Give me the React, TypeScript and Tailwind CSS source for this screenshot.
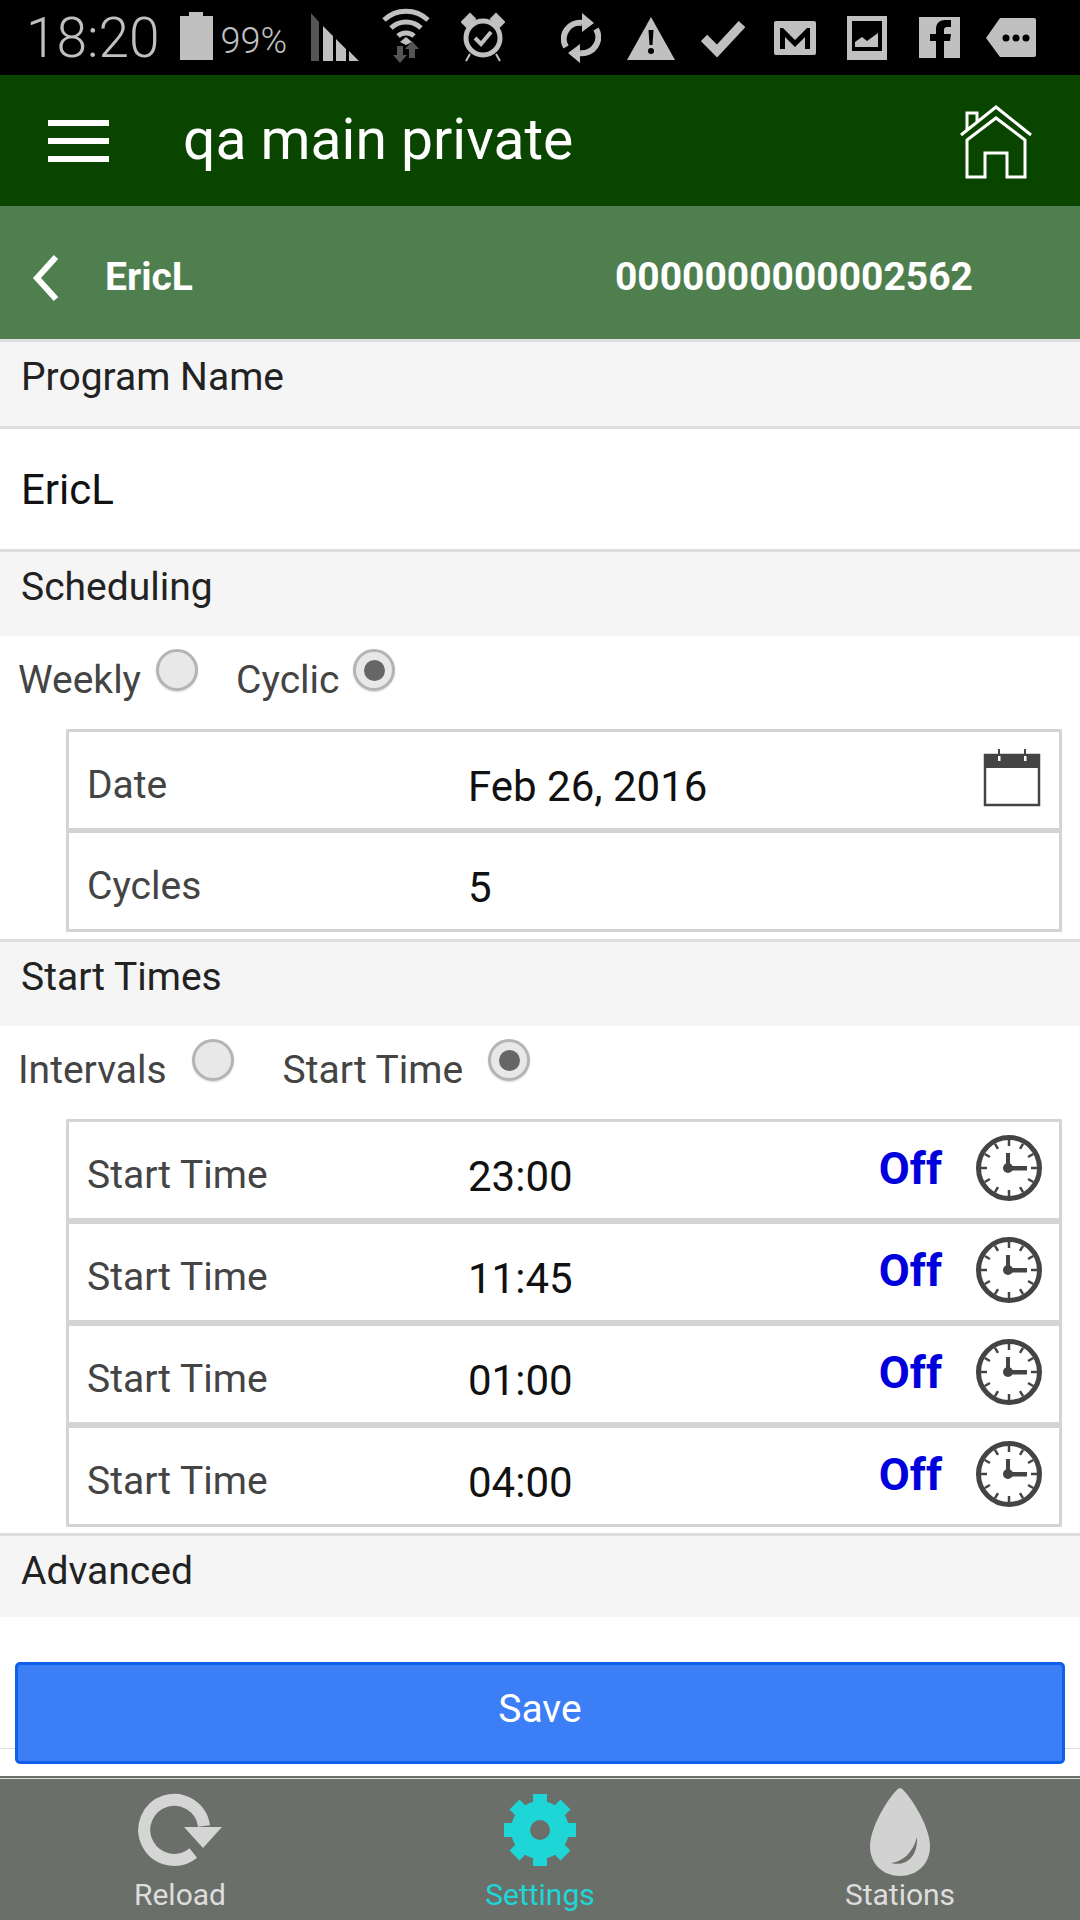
import React from "react";

const G = "#c0c0c0";

function Radio({ checked }: { checked?: boolean }) {
  return (
    <span className="relative flex h-[42px] w-[42px] shrink-0 items-center justify-center rounded-full border-[3px] border-[#b4b4b4] bg-[#e8e8e8] shadow-[0_1px_2px_rgba(0,0,0,0.15)]">
      {checked && <span className="h-[21px] w-[21px] rounded-full bg-[#666666]" />}
    </span>
  );
}

function Section({ label, h = "h-[87px]" }: { label: string; h?: string }) {
  return (
    <div className={`flex ${h} shrink-0 items-start border-t-[3px] border-[#dddddd] bg-[#f5f5f5] pl-[21px] pt-[13px] text-[39px] leading-[44px] text-[#222222]`}>
      {label}
    </div>
  );
}

function Clock() {
  const ticks = [0, 30, 60, 90, 120, 150, 180, 210, 240, 270, 300, 330];
  return (
    <svg viewBox="0 0 70 70" className="h-[70px] w-[70px] shrink-0">
      <circle cx="35" cy="35" r="30.5" fill="none" stroke="#444444" strokeWidth="5" />
      {ticks.map((a) => (
        <line key={a} x1="35" y1="7" x2="35" y2="13" stroke="#444444" strokeWidth="2.500" transform={`rotate(${a} 35 35)`} />
      ))}
      <circle cx="34" cy="35" r="5" fill="#444444" />
      <rect x="32" y="20" width="4" height="15" fill="#444444" />
      <rect x="34" y="33" width="19" height="4.500" fill="#444444" />
    </svg>
  );
}

function Calendar() {
  return (
    <svg viewBox="0 0 58 58" className="h-[58px] w-[58px]">
      <rect x="2" y="6" width="54" height="50" fill="#ffffff" stroke="#444444" strokeWidth="2.5" />
      <rect x="1" y="6" width="56" height="13" fill="#444444" />
      <rect x="15" y="0" width="2" height="7" fill="#444444" />
      <rect x="15" y="7" width="2.5" height="5" fill="#ffffff" />
      <rect x="41" y="0" width="2" height="7" fill="#444444" />
      <rect x="41" y="7" width="2.5" height="5" fill="#ffffff" />
    </svg>
  );
}

function TableRow({ label, value, children }: { label: string; value: string; children?: React.ReactNode }) {
  return (
    <div className="flex h-[96px] items-center">
      <span className="w-[399px] shrink-0 pl-[18px] pt-[10px] text-[39px] text-[#444444]">{label}</span>
      <span className="flex-1 pt-[12px] text-[42px] text-[#111111]">{value}</span>
      {children}
    </div>
  );
}

function StartRow({ value }: { value: string }) {
  return (
    <TableRow label="Start Time" value={value}>
      <span className="mb-[3px] text-[45px] font-bold text-[#0000dd]">Off</span>
      <span className="mb-[4px] ml-[32px] mr-[15px]"><Clock /></span>
    </TableRow>
  );
}

function StatusBar() {
  return (
    <div className="flex h-[75px] shrink-0 items-center bg-black pl-[26px]">
      <span className="text-[55px] font-light leading-[72px] text-[#c0c0c0]">18:20</span>
      <svg viewBox="0 0 33 75" className="ml-[20px] h-[75px] w-[33px]">
        <path d="M9 12h14v4h10v44H0V16h9z" fill={G} />
      </svg>
      <span className="ml-[8px] pt-[6px] text-[36px] font-light leading-[72px] text-[#c0c0c0]">99%</span>
      <svg viewBox="0 0 48 75" className="ml-[24px] h-[75px] w-[48px]">
        <path d="M0 13l8 9v39H0z" fill="#555555" />
        <path d="M12 26l10 10v25H12zM25 39l10 10v12H25zM38 51l10 10H38z" fill={G} />
      </svg>
      <svg viewBox="0 0 50 75" className="ml-[22px] h-[75px] w-[50px]">
        <path d="M3 20a32 32 0 0 1 44 0M10 28a22 22 0 0 1 30 0M17 36a12 12 0 0 1 16 0" fill="none" stroke={G} strokeWidth="5" />
        <path d="M25 37l6 5-6 3-6-3z" fill={G} />
        <path d="M16 46h6v9h4l-7 8-7-8h4z" fill="#555555" />
        <path d="M28 53h6v-9h4l-7-8-7 8h4z" fill="#555555" transform="translate(0 5)" />
      </svg>
      <svg viewBox="0 0 44 75" className="ml-[30px] h-[75px] w-[44px]">
        <circle cx="22" cy="38" r="17" fill="none" stroke={G} strokeWidth="5" />
        <path d="M14 38l6 6 10-12" fill="none" stroke={G} strokeWidth="4" />
        <path d="M1 22l8-8 5 5-8 8zM43 22l-8-8-5 5 8 8zM9 54l-4 7M35 54l4 7" fill={G} stroke={G} strokeWidth="2" />
      </svg>
      <svg viewBox="0 0 40 75" className="ml-[56px] h-[75px] w-[40px]">
        <path d="M5 47A16 16 0 0 1 21 23M35 29a16 16 0 0 1-16 24" fill="none" stroke={G} strokeWidth="6" />
        <path d="M21 13l12 10-12 9zM19 44L7 53l12 10z" fill={G} />
      </svg>
      <svg viewBox="0 0 48 75" className="ml-[26px] h-[75px] w-[48px]">
        <path d="M24 17l24 43H0z" fill={G} />
        <path d="M21.500 30h5l-1 15h-3z" fill="#000000" />
        <circle cx="24" cy="51" r="3" fill="#000000" />
      </svg>
      <svg viewBox="0 0 44 75" className="ml-[26px] h-[75px] w-[44px]">
        <path d="M3 38l13 13L41 24" fill="none" stroke={G} strokeWidth="9" />
      </svg>
      <svg viewBox="0 0 42 75" className="ml-[29px] h-[75px] w-[42px]">
        <path d="M2 21h38a2 2 0 0 1 2 2v30a2 2 0 0 1-2 2H2a2 2 0 0 1-2-2V23a2 2 0 0 1 2-2z" fill={G} />
        <path d="M6 49V28h3l12 12 12-12h3v21h-5V37L21 47 11 37v12z" fill="#000000" />
        <path d="M11 27h20L21 37z" fill={G} />
      </svg>
      <svg viewBox="0 0 40 75" className="ml-[31px] h-[75px] w-[40px]">
        <path d="M0 16h40v44H0z" fill={G} />
        <path d="M5 21h30v30H5z" fill="#000000" />
        <path d="M8 47v-5l7-5 5 4 11-8v14z" fill={G} />
      </svg>
      <svg viewBox="0 0 41 75" className="ml-[32px] h-[75px] w-[41px]">
        <path d="M0 17h41v41H0z" fill={G} />
        <path d="M17 58V41h-6v-7h6v-5c0-6 4-9 9-9h6v7h-4c-2 0-3 1-3 3v4h7l-1 7h-6v17z" fill="#000000" />
      </svg>
      <svg viewBox="0 0 50 75" className="ml-[26px] h-[75px] w-[50px]">
        <path d="M14 18h34a2 2 0 0 1 2 2v35a2 2 0 0 1-2 2H14L0 38z" fill={G} />
        <circle cx="20" cy="38" r="3.500" fill="#000000" />
        <circle cx="30" cy="38" r="3.500" fill="#000000" />
        <circle cx="40" cy="38" r="3.500" fill="#000000" />
      </svg>
    </div>
  );
}

function Gear() {
  const teeth = [0, 45, 90, 135, 180, 225, 270, 315];
  return (
    <svg viewBox="0 0 80 80" className="h-[80px] w-[80px]">
      <circle cx="40" cy="40" r="29" fill="#1fd6d6" />
      {teeth.map((a) => (
        <rect key={a} x="33" y="4" width="14" height="14" fill="#1fd6d6" transform={`rotate(${a} 40 40)`} />
      ))}
      <circle cx="40" cy="40" r="10" fill="#6b6f6a" />
    </svg>
  );
}

function NavItem({ label, color, children }: { label: string; color: string; children: React.ReactNode }) {
  return (
    <div className="flex flex-col items-center">
      <div className="flex h-[100px] w-full items-start justify-center">{children}</div>
      <span className={`mt-[-2px] text-[30px] leading-[36px] ${color}`}>{label}</span>
    </div>
  );
}

export default function App() {
  return (
    <div className="flex h-[1920px] w-[1080px] flex-col overflow-hidden bg-white font-['Roboto','sans-serif']">
      <StatusBar />

      <div className="flex h-[131px] shrink-0 items-center bg-[#0a4500]">
        <div className="ml-[48px] flex h-[42px] w-[61px] flex-col justify-between">
          <span className="h-[6px] bg-white" />
          <span className="h-[6px] bg-white" />
          <span className="h-[6px] bg-white" />
        </div>
        <span className="ml-[74px] flex-1 pb-[2px] text-[57px] leading-[60px] text-white">qa main private</span>
        <svg viewBox="0 0 120 100" className="mr-[20px] h-[100px] w-[120px]" fill="none" stroke="#ffffff" strokeWidth="3">
          <path d="M21 44L56 16l35 28" />
          <path d="M27 49L56 27l29 22v37H67V62H45v24H27z" />
          <path d="M27 39V22h10v8" />
        </svg>
      </div>

      <div className="flex h-[133px] shrink-0 items-center bg-[#4f7f4f] pt-[10px] text-white">
        <svg viewBox="0 0 30 50" className="ml-[31px] h-[50px] w-[30px]" fill="none" stroke="#ffffff" strokeWidth="6">
          <path d="M25 4L6 25l19 21" />
        </svg>
        <span className="ml-[44px] text-[39px] font-bold">EricL</span>
        <span className="ml-auto mr-[107px] text-[39px] font-bold">0000000000002562</span>
      </div>

      <Section label="Program Name" />
      <div className="flex h-[123px] shrink-0 items-center border-t-[3px] border-[#dddddd] pl-[21px] text-[42px] text-[#111111]">
        EricL
      </div>
      <Section label="Scheduling" />

      <div className="flex h-[93px] shrink-0 items-start pl-[18px] pt-[13px] text-[39px] text-[#444444]">
        <span className="mt-[2px]">Weekly</span>
        <span className="ml-[15px]"><Radio /></span>
        <span className="ml-[38px] mt-[2px]">Cyclic</span>
        <span className="ml-[14px]"><Radio checked /></span>
      </div>

      <div className="ml-[66px] flex w-[996px] shrink-0 flex-col border-[3px] border-[#d4d4d4]">
        <TableRow label="Date" value="Feb 26, 2016">
          <span className="mb-[4px] mr-[18px]"><Calendar /></span>
        </TableRow>
        <div className="h-[5px] bg-[#d4d4d4]" />
        <TableRow label="Cycles" value="5" />
      </div>

      <div className="mt-[7px]"><Section label="Start Times" /></div>

      <div className="flex h-[93px] shrink-0 items-start pl-[18px] pt-[13px] text-[39px] text-[#444444]">
        <span className="mt-[2px]">Intervals</span>
        <span className="ml-[25px]"><Radio /></span>
        <span className="ml-[49px] mt-[2px]">Start Time</span>
        <span className="ml-[25px]"><Radio checked /></span>
      </div>

      <div className="ml-[66px] flex w-[996px] shrink-0 flex-col border-[3px] border-[#d4d4d4]">
        <StartRow value="23:00" />
        <div className="h-[6px] bg-[#d4d4d4]" />
        <StartRow value="11:45" />
        <div className="h-[6px] bg-[#d4d4d4]" />
        <StartRow value="01:00" />
        <div className="h-[6px] bg-[#d4d4d4]" />
        <StartRow value="04:00" />
      </div>

      <div className="mt-[6px]"><Section label="Advanced" h="h-[84px]" /></div>

      <div className="relative flex-1 px-[15px] pt-[45px]">
        <div className="absolute left-0 right-0 top-[131px] h-px bg-[#dddddd]" />
        <button className="relative flex h-[102px] w-full items-center justify-center rounded-[5px] border-[3px] border-[#0f5fe8] bg-[#3b7ef5] pb-[8px] text-[39px] text-white">
          Save
        </button>
      </div>

      <div className="h-[144px] shrink-0 border-t-2 border-[#6b6f6a] bg-[#6b6f6a]">
        <div className="h-px bg-[#dddddd]" />
        <div className="grid grid-cols-3">
          <NavItem label="Reload" color="text-[#dddddd]">
            <svg viewBox="0 0 90 80" className="mt-[11px] h-[80px] w-[90px]">
              <path d="M58.300 63A30 30 0 1 1 69 36" fill="none" stroke="#d5d5d5" strokeWidth="12" />
              <path d="M49 37h38L68 58z" fill="#d5d5d5" />
            </svg>
          </NavItem>
          <NavItem label="Settings" color="text-[#1fd6d6]">
            <span className="mt-[11px]"><Gear /></span>
          </NavItem>
          <NavItem label="Stations" color="text-[#dddddd]">
            <svg viewBox="0 0 100 110" className="h-[110px] w-[100px] shrink-0">
              <path d="M50 9C45 9 20 45 20 67C20 85 33 97 50 97C67 97 80 85 80 67C80 45 55 9 50 9Z" fill="#d2d2d2" />
              <path d="M67 58C68 78 56 88 41 84C52 83 63 74 67 58Z" fill="#6b6f6a" />
            </svg>
          </NavItem>
        </div>
      </div>
    </div>
  );
}
